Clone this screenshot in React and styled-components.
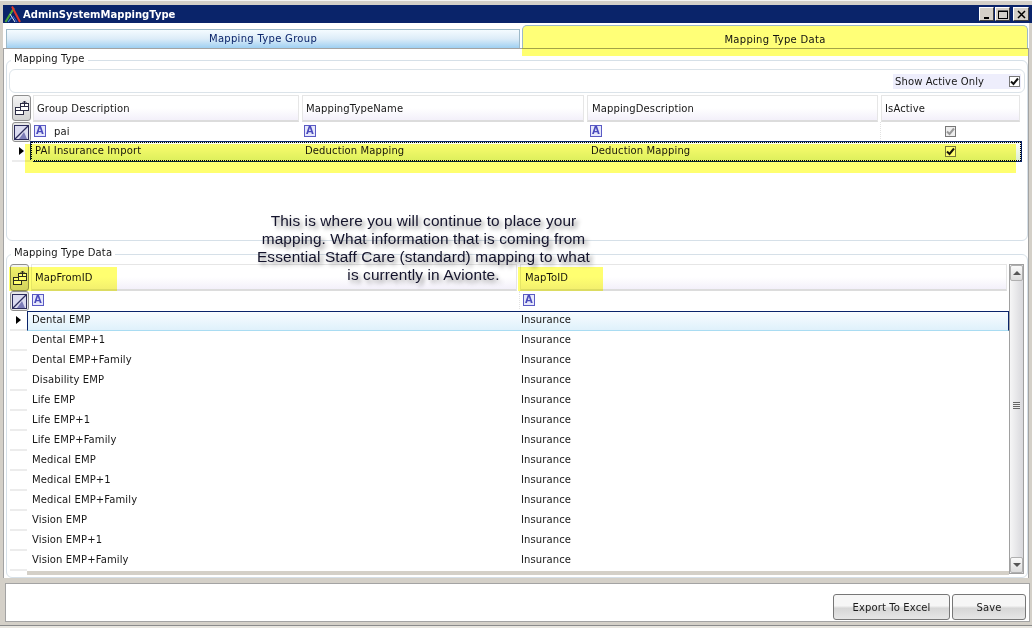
import React from 'react';
import styled, { createGlobalStyle, css } from 'styled-components';

const Global = createGlobalStyle`
  html, body { margin: 0; padding: 0; background: #d4d0c8; }
  * { box-sizing: border-box; }
`;
const uiFont = `"DejaVu Sans", Verdana, sans-serif`;

const Page = styled.div`
  position: relative; width: 1032px; height: 628px; overflow: hidden;
  background: #d4d0c8; font: 10px ${uiFont}; color: #161616; letter-spacing: 0.12px;
  display: flex; flex-direction: column;
  border-top: 1px solid #f4f4f2;
  padding: 4px 0 0 3px;
  box-shadow: inset 0 -2px 0 #e8e6e0, inset 0 -3px 0 #8a8a8a;
`;
const TitleBar = styled.div`
  flex: none; height: 18px; background: #0a246a; display: flex; align-items: center;
  padding: 0 3px 0 1px; color: #fff; font-weight: 700; font-size: 10px; letter-spacing: 0;
`;
const TitleText = styled.span`margin-left: 1px; flex: 1;`;
const WinBtn = styled.div`
  width: ${p => p.$w || 15}px; height: 14px; margin-left: ${p => p.$gap || 1}px; background: #d4d0c8;
  border: 1px solid; border-color: #fff #404040 #404040 #fff;
  display: flex; align-items: center; justify-content: center;
`;
const Tabs = styled.div`
  flex: none; width: 1026px; height: 25px; display: flex; align-items: flex-end; background: #fff;
  padding-left: 3px; gap: 2px;
`;
const Tab = styled.div`
  display: flex; align-items: center; justify-content: center; height: ${p => p.$active ? 23 : 19}px;
  width: ${p => p.$active ? 506 : 514}px; border: 1px solid #9db9c9; border-bottom: 0;
  color: ${p => p.$active ? '#111' : '#0a246a'}; letter-spacing: 0.3px;
  background: ${p => p.$active ? '#ffff77' : 'linear-gradient(#f4fbff, #dcecf8 50%, #9fd0f2)'};
  border-radius: ${p => p.$active ? '5px 5px 0 0' : '0'};
  padding: ${p => p.$active ? '4px 0 0' : '0 0 1px'};
`;
const Main = styled.div`
  flex: none; height: 530px; width: 1026px; background: #fff; border: 1px solid #a3a3a3; border-width: 1px 1px 0 1px;
  padding: 11px 0 0 2px; display: flex; flex-direction: column;
`;
const Group = styled.fieldset`
  margin: 0; padding: ${p => p.$pad}; width: ${p => p.$w}px; height: ${p => p.$h}px; flex: none; min-width: 0;
  border: 1px solid #d6e0e8; border-radius: 6px; position: relative;
  margin-top: ${p => p.$mt || 0}px;
`;
const Legend = styled.span`
  position: absolute; left: 4px; top: -9px; background: #fff; padding: 0 3px; line-height: 13px;
`;
const Toolbar = styled.div`
  height: 24px; margin: 8px 2px 0 2px; border: 1px solid #dbe3e9; border-radius: 6px;
  display: flex; align-items: center; justify-content: flex-end; padding-right: 3px;
`;
const ShowActive = styled.label`
  width: 128px; height: 15px; background: #eeeefc; display: flex; align-items: center; justify-content: space-between;
  padding: 0 1px 0 2px;
`;
const Check = styled.span`
  width: 11px; height: 11px; border: 1px solid #777; background: ${p => p.$dim ? '#eee' : '#fff'};
  display: inline-flex; align-items: center; justify-content: center; flex: none;
`;
const Grid = styled.div`
  position: relative;
  display: grid; grid-template-columns: ${p => p.$cols}; margin: ${p => p.$m};
`;
const Chooser = styled.div`
  height: ${p => p.$h}px; border: 1px solid #8f8f8f; border-radius: 3px; background: linear-gradient(#f4f4f4, #d2d2d2);
  display: flex; align-items: center; justify-content: center;
  margin-right: 2px;
`;
const HeaderCell = styled.div`
  height: ${p => p.$h}px; margin-right: ${p => p.$last ? 0 : 3}px; border: 1px solid #e6e6e6; border-bottom: 2px solid #dcdcdc;
  background: linear-gradient(#fff 50%, #f3f0fa); display: flex; align-items: center; padding-left: ${p => p.$pl || 3}px;
`;
const FilterBtn = styled.div`
  height: ${p => p.$h}px; width: 19px; border: 1px solid #8f8f8f; border-radius: 3px; background: #e8e8e8;
  display: flex; align-items: center; justify-content: center;
`;
const FilterCell = styled.div`
  height: ${p => p.$h}px; display: flex; align-items: center; padding-left: ${p => p.$pl}px; padding-bottom: 1px;
  border-right: ${p => p.$sep ? '1px dotted #e2e2e2' : '0'}; gap: 8px;
  justify-content: ${p => p.$center ? 'center' : 'flex-start'};
`;
const AIcon = styled.span`
  width: 12px; height: 12px; border: 1px solid #5a5ac4; background: #e6e8fb; color: #4a4abc;
  font: 700 10px/10px "DejaVu Sans", sans-serif; text-align: center; flex: none;
`;
const Selector = styled.div`
  height: ${p => p.$h}px; display: flex; align-items: center; justify-content: center;
  border-bottom: ${p => p.$line ? '2px solid #ececec' : '0'}; padding-right: ${p => p.$pr || 0}px;
`;
const Arrow = styled.span`
  width: 0; height: 0; border-left: 5px solid #000; border-top: 4px solid transparent; border-bottom: 4px solid transparent;
`;
const Cell = styled.div`
  height: ${p => p.$h}px; display: flex; align-items: center; padding-left: ${p => p.$pl}px;
  padding-bottom: ${p => p.$center ? 2 : 4}px;
  justify-content: ${p => p.$center ? 'center' : 'flex-start'};
`;
const Focus = styled.div`
  position: absolute; border: 1px dotted #000; box-shadow: 0 0 0 1px #0a246a;
  left: 24px; top: 81px; width: 990px; height: 19px; pointer-events: none;
  background: linear-gradient(rgba(225,240,215,.1), rgba(190,225,170,.5));
`;
const DataArea = styled.div`display: grid; grid-template-columns: 17px 1fr; margin-left: 3px;`;
const DataRow = styled.div`
  display: grid; grid-template-columns: 489px 1fr; height: 20px; align-items: center; padding-bottom: 3px; width: 982px;
  ${p => p.$current && css`
    background: linear-gradient(#f8fcff, #dff1fb);
    border: 1px solid #0a246a; border-bottom-color: #a9dcf2; padding-bottom: 4px;
  `}
`;
const DataText = styled.span`padding-left: ${p => p.$pl}px;`;
const HScroll = styled.div`height: 4px; width: 982px; background: #d4d0c8; margin-left: 20px;`;
const ScrollBar = styled.div`
  position: absolute; left: 1002px; top: 9px; width: 15px; height: 310px; border: 1px solid #a0a0a0;
  background: linear-gradient(90deg, #f6f6f6, #d8d8dc); display: flex; flex-direction: column; justify-content: space-between;
`;
const ScrollBtn = styled.div`
  height: 16px; background: linear-gradient(#fafafa, #dcdcdc); border: 1px solid #b0b0b0; border-radius: 2px;
  display: flex; align-items: center; justify-content: center;
`;
const Tri = styled.span`
  width: 0; height: 0; border-left: 4px solid transparent; border-right: 4px solid transparent;
  ${p => p.$up ? 'border-bottom: 4px solid #555;' : 'border-top: 4px solid #555;'}
`;
const Grip = styled.span`
  position: absolute; left: 3px; top: 137px; width: 7px; height: 7px;
  background: repeating-linear-gradient(#666 0 1px, #eee 1px 2px);
`;
const Footer = styled.div`
  margin: 5px 0 0 2px; width: 1025px; height: 39px; flex: none; border: 1px solid #a3a3a3; background: #fff;
  display: flex; justify-content: flex-end; align-items: flex-end; padding: 0 3px 1px 0; gap: 2px;
`;
const Button = styled.button`
  width: ${p => p.$w}px; height: 26px; border: 1px solid #777; border-radius: 3px; color: #1c1c1c;
  font: 10px ${uiFont}; letter-spacing: 0.12px; background: linear-gradient(#f6f6f6 45%, #d6d6d6 55%, #e6e6e6); padding: 0;
`;
const Highlight = styled.div`
  position: absolute; left: ${p => p.$x}px; top: ${p => p.$y}px; width: ${p => p.$w}px; height: ${p => p.$h}px;
  background: #ffff70; mix-blend-mode: multiply; pointer-events: none;
`;
const Callout = styled.div`
  position: absolute; left: 251px; top: 211px; width: 345px; text-align: center;
  font: 15.4px/18px "Liberation Sans", Arial, sans-serif; color: #14142c;
  text-shadow: 3px 3px 4px rgba(0,0,0,.45);
`;

const ChooserIcon = () => (
  <svg width="15" height="16" viewBox="0 0 15 16" fill="none" stroke="#2c2c44" strokeWidth="1">
    <rect x="1.5" y="7.5" width="8" height="7" fill="#fff" />
    <path d="M1.5 10.5h8" />
    <rect x="6.5" y="3.5" width="8" height="7" fill="#fff" />
    <path d="M6.5 6.5h8M10.5 6V1M8.5 3l2-2 2 2" />
  </svg>
);
const FilterIcon = () => (
  <svg width="15" height="15" viewBox="0 0 15 15">
    <rect x=".5" y=".5" width="14" height="14" fill="#dcdcf0" stroke="#2c2c5c" />
    <path d="M1 14L14 1" stroke="#2c2c5c" strokeWidth="1.2" />
    <path d="M5 14l5-7 3 7z" fill="#7c7cb8" />
  </svg>
);
const Tick = ({ color = '#111' }) => (
  <svg width="9" height="9" viewBox="0 0 9 9"><path d="M1 4.5l2.5 2.5L8 1.5" fill="none" stroke={color} strokeWidth="2" /></svg>
);
const Logo = () => (
  <svg width="18" height="18" viewBox="0 0 18 18" fill="none">
    <path d="M1.5 17L10 3" stroke="#4aa83a" strokeWidth="2" />
    <path d="M8 1.5L16 17" stroke="#e0342a" strokeWidth="2" />
    <path d="M6 9l5 8" stroke="#d8e8f0" strokeWidth="1" />
    <path d="M4 17l4-5" stroke="#4a90e0" strokeWidth="1.2" />
    <path d="M9 11l4 6" stroke="#3a5ad0" strokeWidth="1" />
  </svg>
);

const rows = ['Dental EMP','Dental EMP+1','Dental EMP+Family','Disability EMP','Life EMP','Life EMP+1','Life EMP+Family','Medical EMP','Medical EMP+1','Medical EMP+Family','Vision EMP','Vision EMP+1','Vision EMP+Family'];
const topCols = '21px 269px 285px 294px 139px';

export default function App() {
  return (
    <Page>
      <Global />
      <TitleBar>
        <Logo />
        <TitleText>AdminSystemMappingType</TitleText>
        <WinBtn><svg width="9" height="9"><path d="M2 8h5" stroke="#000" strokeWidth="2" /></svg></WinBtn>
        <WinBtn><svg width="10" height="9"><rect x=".5" y="1" width="9" height="7.5" fill="none" stroke="#000" /><path d="M0 1.5h10" stroke="#000" /></svg></WinBtn>
        <WinBtn $w={16} $gap={3}><svg width="9" height="9"><path d="M1 1l7 7M8 1L1 8" stroke="#000" strokeWidth="1.5" /></svg></WinBtn>
      </TitleBar>
      <Tabs>
        <Tab>Mapping Type Group</Tab>
        <Tab $active>Mapping Type Data</Tab>
      </Tabs>
      <Main>
        <Group $w={1022} $h={181} $pad="0">
          <Legend>Mapping Type</Legend>
          <Toolbar>
            <ShowActive>Show Active Only<Check><Tick /></Check></ShowActive>
          </Toolbar>
          <Focus />
          <Grid $cols={topCols} $m="2px 0 0 5px">
            <Chooser $h={26}><ChooserIcon /></Chooser>
            <HeaderCell $h={27}>Group Description</HeaderCell>
            <HeaderCell $h={27}>MappingTypeName</HeaderCell>
            <HeaderCell $h={27} $pl={4}>MappingDescription</HeaderCell>
            <HeaderCell $h={27} $last>IsActive</HeaderCell>
            <FilterBtn $h={20}><FilterIcon /></FilterBtn>
            <FilterCell $h={19} $pl={1}><AIcon>A</AIcon>pai</FilterCell>
            <FilterCell $h={19} $pl={2}><AIcon>A</AIcon></FilterCell>
            <FilterCell $h={19} $pl={3} $sep><AIcon>A</AIcon></FilterCell>
            <FilterCell $h={19} $center><Check $dim><Tick color="#999" /></Check></FilterCell>
            <Selector $h={20} $line $pr={3}><Arrow /></Selector>
            <Cell $h={20} $pl={2}>PAI Insurance Import</Cell>
            <Cell $h={20} $pl={3}>Deduction Mapping</Cell>
            <Cell $h={20} $pl={4}>Deduction Mapping</Cell>
            <Cell $h={20} $center><Check><Tick /></Check></Cell>
          </Grid>
        </Group>
        <Group $w={1022} $h={324} $pad="9px 0 0 0" $mt={13}>
          <Legend>Mapping Type Data</Legend>
          <Grid $cols="21px 489px 487px" $m="0 0 0 3px">
            <Chooser $h={27}><ChooserIcon /></Chooser>
            <HeaderCell $h={27} $pl={3}>MapFromID</HeaderCell>
            <HeaderCell $h={27} $pl={4} $last>MapToID</HeaderCell>
            <FilterBtn $h={20}><FilterIcon /></FilterBtn>
            <FilterCell $h={18} $pl={1} $sep><AIcon>A</AIcon></FilterCell>
            <FilterCell $h={18} $pl={3}><AIcon>A</AIcon></FilterCell>
          </Grid>
          <DataArea>
            {rows.map((r, i) => (
              <React.Fragment key={r}>
                <Selector $h={20} $line>{i === 0 && <Arrow />}</Selector>
                <DataRow $current={i === 0}>
                  <DataText $pl={i === 0 ? 4 : 5}>{r}</DataText>
                  <DataText $pl={i === 0 ? 4 : 5}>Insurance</DataText>
                </DataRow>
              </React.Fragment>
            ))}
          </DataArea>
          <HScroll />
          <ScrollBar>
            <ScrollBtn><Tri $up /></ScrollBtn>
            <Grip />
            <ScrollBtn><Tri /></ScrollBtn>
          </ScrollBar>
        </Group>
      </Main>
      <Footer>
        <Button $w={117}>Export To Excel</Button>
        <Button $w={74}>Save</Button>
      </Footer>
      <Highlight $x={522} $y={47} $w={506} $h={8} />
      <Highlight $x={25} $y={143} $w={991} $h={29} />
      <Highlight $x={9} $y={266} $w={108} $h={24} />
      <Highlight $x={518} $y={266} $w={85} $h={24} />
      <Callout>This is where you will continue to place your mapping. What information that is coming from Essential Staff Care (standard) mapping to what is currently in Avionte.</Callout>
    </Page>
  );
}
